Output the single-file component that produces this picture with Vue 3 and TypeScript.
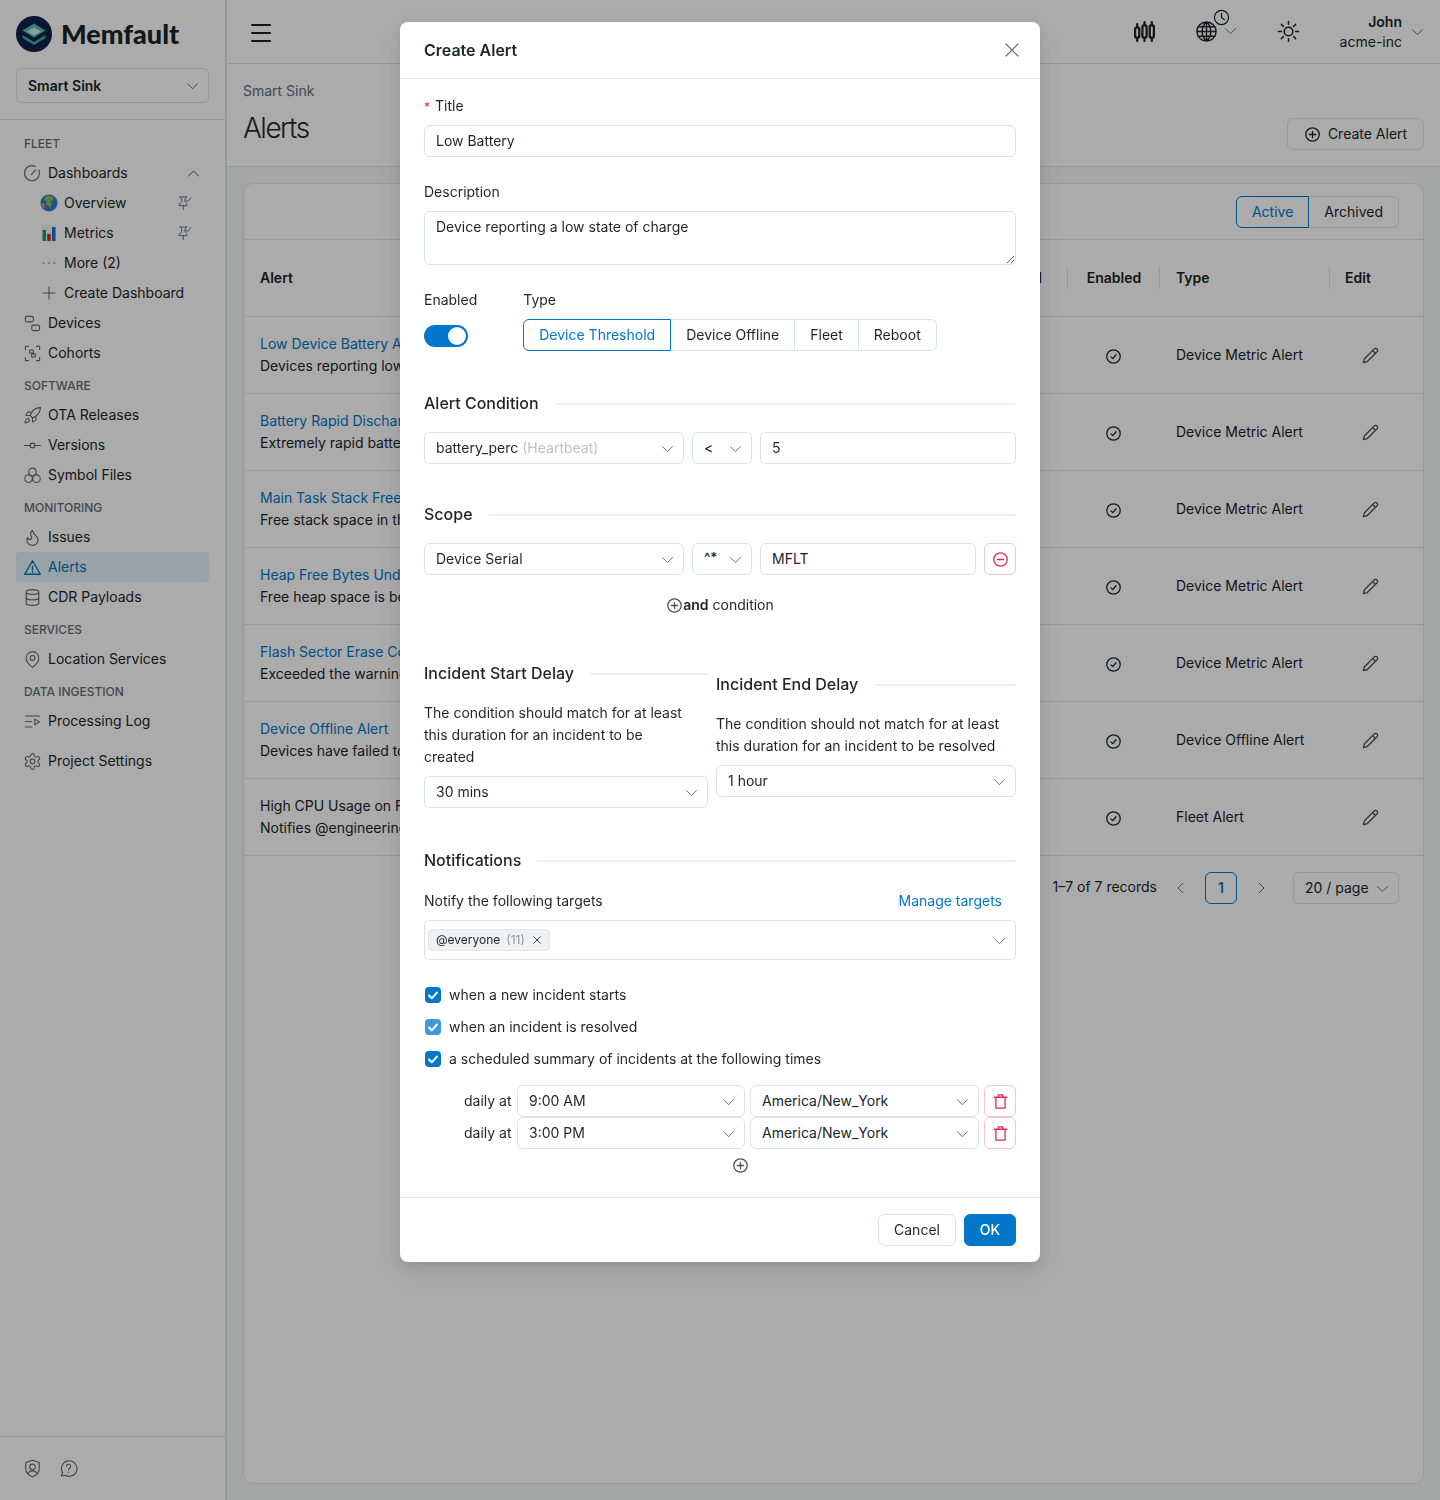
<script setup lang="ts">
import { h } from 'vue';
import type { FunctionalComponent } from 'vue';

const circle = (x: number, y: number, r: number) =>
    `M${x - r} ${y}a${r} ${r} 0 1 0 ${2 * r} 0a${r} ${r} 0 1 0 ${-2 * r} 0`;

const icons = {
    chev: 'M4 9l8 8 8-8',
    chevUp: 'M4 16l8-8 8 8',
    left: 'M15 4l-8 8 8 8',
    right: 'M9 4l8 8-8 8',
    close: 'M4 4l16 16M20 4L4 20',
    plus: 'M12 4v16M4 12h16',
    dots: 'M4 12h1.5M11.2 12h1.5M18.5 12H20',
    gauge: 'M20 7.5A9.5 9.5 0 1 1 15.5 3M10.5 13.5L16 7.5',
    devices: 'M5 3h6a2 2 0 0 1 2 2v3a2 2 0 0 1-2 2H5a2 2 0 0 1-2-2V5a2 2 0 0 1 2-2zM13 14h6a2 2 0 0 1 2 2v3a2 2 0 0 1-2 2h-6a2 2 0 0 1-2-2v-3a2 2 0 0 1 2-2z',
    cohorts: 'M3 7V3h4M17 3h4v4M21 17v4h-4M7 21H3v-4M8.5 7.5h4.5v4H8.5zM11 12.5h4.5v4H11z',
    rocket: 'M4.5 16.5c-1.5 1.3-2 5-2 5s3.7-.5 5-2c.7-.8.7-2.1-.1-2.9a2.2 2.2 0 0 0-2.9-.1zM12 15l-3-3a22 22 0 0 1 2-3.9A12.9 12.9 0 0 1 22 2c0 2.7-.8 7.5-6 11a22 22 0 0 1-4 2zM9 12H4s.6-3 2-4c1.6-1.1 5 0 5 0M12 15v5s3-.6 4-2c1.1-1.6 0-5 0-5',
    commit: `${circle(12, 12, 3)}M2 12h7M15 12h7`,
    symbols: `${circle(12, 7.5, 4.8)}${circle(7, 16, 4.8)}${circle(17, 16, 4.8)}`,
    flame: 'M8.5 14.5A2.5 2.5 0 0 0 11 12c0-1.38-.5-2-1-3-1.07-2.14-.22-4.05 2-6 .5 2.5 2 4.9 4 6.5 2 1.6 3 3.5 3 5.5a7 7 0 1 1-14 0c0-1.15.43-2.29 1-3a2.5 2.5 0 0 0 2.5 2.5z',
    alert: 'M12 3.5L2.2 20.5h19.6zM12 10v5M12 17.2v.8',
    database: 'M4 5c0-1.7 3.6-3 8-3s8 1.3 8 3-3.6 3-8 3-8-1.3-8-3zM4 5v14c0 1.7 3.6 3 8 3s8-1.3 8-3V5M4 12c0 1.7 3.6 3 8 3s8-1.3 8-3',
    pin: `M20 10c0 6-8 12-8 12s-8-6-8-12a8 8 0 0 1 16 0z${circle(12, 10, 3)}`,
    log: 'M3 5h18M3 12h8M3 19h8M15 9l6 3.5-6 3.5z',
    gear: `M12.22 2h-.44a2 2 0 0 0-2 2v.18a2 2 0 0 1-1 1.73l-.43.25a2 2 0 0 1-2 0l-.15-.08a2 2 0 0 0-2.73.73l-.22.38a2 2 0 0 0 .73 2.73l.15.1a2 2 0 0 1 1 1.72v.51a2 2 0 0 1-1 1.74l-.15.09a2 2 0 0 0-.73 2.73l.22.38a2 2 0 0 0 2.73.73l.15-.08a2 2 0 0 1 2 0l.43.25a2 2 0 0 1 1 1.73V20a2 2 0 0 0 2 2h.44a2 2 0 0 0 2-2v-.18a2 2 0 0 1 1-1.73l.43-.25a2 2 0 0 1 2 0l.15.08a2 2 0 0 0 2.73-.73l.22-.39a2 2 0 0 0-.73-2.73l-.15-.08a2 2 0 0 1-1-1.74v-.5a2 2 0 0 1 1-1.74l.15-.09a2 2 0 0 0 .73-2.73l-.22-.38a2 2 0 0 0-2.73-.73l-.15.08a2 2 0 0 1-2 0l-.43-.25a2 2 0 0 1-1-1.73V4a2 2 0 0 0-2-2z${circle(12, 12, 3)}`,
    pinCheck: 'M4 3h11M14 3l-2 3v4M5 3l2 3v4l-4 4v2h12v-2l-2-2M9.500 16v6M13 7.500l2.500 2.500L21 4',
    shield: `M12 1.500l8.500 3v8c0 4.500-3.500 8-8.500 10-5-2-8.500-5.500-8.500-10v-8z${circle(12, 10, 3.500)}M6.500 18.500c1-2.500 3-3.500 5.500-3.500s4.500 1 5.500 3.500`,
    help: 'M3 21.500l1.500-4.500A9.800 9.800 0 1 1 8 20.500zM9.300 9.300a2.700 2.700 0 1 1 4 2.400c-.9.500-1.300 1-1.300 1.900M12 16.500v.5',
    menu: 'M3 4h18M3 12h18M3 20h18',
    candles: 'M5 5v3M5 18v3M12 3v3M12 18v3M19 3v3M19 18v3M3 10a2 2 0 0 1 4 0v6a2 2 0 0 1-4 0zM10 8a2 2 0 0 1 4 0v8a2 2 0 0 1-4 0zM17 8a2 2 0 0 1 4 0v8a2 2 0 0 1-4 0z',
    globe: `${circle(12, 12, 10)}M2 12h20M3 7h18M3 17h18M12 2v20M12 2c-6 5-6 15 0 20M12 2c6 5 6 15 0 20`,
    clock: `${circle(12, 12, 10)}M12 6v6l4 3`,
    sun: `${circle(12, 12, 4.500)}M12 1.500v3M12 19.500v3M1.500 12h3M19.500 12h3M4.600 4.600l2.100 2.100M17.300 17.300l2.100 2.100M4.600 19.400l2.100-2.100M17.300 6.700l2.100-2.100`,
    plusCircle: `${circle(12, 12, 9.500)}M12 7.500v9M7.500 12h9`,
    minusCircle: `${circle(12, 12, 9.500)}M7.500 12h9`,
    checkCircle: `${circle(12, 12, 9.500)}M8.500 12.500l2.500 2.500 4.500-5.500`,
    pencil: 'M17 3a2.850 2.830 0 1 1 4 4L7.500 20.500 2 22l1.500-5.500zM15 5l4 4',
    trash: 'M3 6h18M9 6V2.500h6V6M5.500 6v15.500h13V6',
};

const Ico: FunctionalComponent<{ d: string }> = (props) =>
    h('svg', { viewBox: '0 0 24 24', fill: 'none', stroke: 'currentColor', 'stroke-width': 1.8, 'stroke-linecap': 'round', 'stroke-linejoin': 'round' }, [
        h('path', { d: props.d }),
    ]);
Ico.props = ['d'];

type NavItem = { label: string; icon?: string; sub?: boolean; pinned?: boolean; emoji?: string; active?: boolean; open?: boolean; gap?: boolean };

const nav: { title?: string; items: NavItem[] }[] = [
    {
        title: 'FLEET',
        items: [
            { label: 'Dashboards', icon: icons.gauge, open: true },
            { label: 'Overview', sub: true, emoji: 'globe', pinned: true },
            { label: 'Metrics', sub: true, emoji: 'chart', pinned: true },
            { label: 'More (2)', sub: true, icon: icons.dots },
            { label: 'Create Dashboard', sub: true, icon: icons.plus },
            { label: 'Devices', icon: icons.devices },
            { label: 'Cohorts', icon: icons.cohorts },
        ],
    },
    {
        title: 'SOFTWARE',
        items: [
            { label: 'OTA Releases', icon: icons.rocket },
            { label: 'Versions', icon: icons.commit },
            { label: 'Symbol Files', icon: icons.symbols },
        ],
    },
    {
        title: 'MONITORING',
        items: [
            { label: 'Issues', icon: icons.flame },
            { label: 'Alerts', icon: icons.alert, active: true },
            { label: 'CDR Payloads', icon: icons.database },
        ],
    },
    { title: 'SERVICES', items: [{ label: 'Location Services', icon: icons.pin }] },
    {
        title: 'DATA INGESTION',
        items: [
            { label: 'Processing Log', icon: icons.log },
            { label: 'Project Settings', icon: icons.gear, gap: true },
        ],
    },
];

const rows = [
    { title: 'Low Device Battery Alert', desc: 'Devices reporting low', type: 'Device Metric Alert', link: true },
    { title: 'Battery Rapid Discharge', desc: 'Extremely rapid battery', type: 'Device Metric Alert', link: true },
    { title: 'Main Task Stack Free', desc: 'Free stack space in the', type: 'Device Metric Alert', link: true },
    { title: 'Heap Free Bytes Under', desc: 'Free heap space is below', type: 'Device Metric Alert', link: true },
    { title: 'Flash Sector Erase Count', desc: 'Exceeded the warning', type: 'Device Metric Alert', link: true },
    { title: 'Device Offline Alert', desc: 'Devices have failed to', type: 'Device Offline Alert', link: true },
    { title: 'High CPU Usage on Fleet', desc: 'Notifies @engineering', type: 'Fleet Alert', link: false },
];

const alertTypes = ['Device Threshold', 'Device Offline', 'Fleet', 'Reboot'];
const notifyOptions = ['when a new incident starts', 'when an incident is resolved', 'a scheduled summary of incidents at the following times'];
const schedules = ['9:00 AM', '3:00 PM'];
</script>

<template>
  <div class="page">
    <aside class="sidebar">
      <div class="brand">
        <svg class="logo" viewBox="0 0 36 36">
          <circle cx="18" cy="18" r="18" fill="#13214d" />
          <path d="M18 7.500L6.500 14.500 18 21.500l11.500-7z" fill="#4fc3b4" />
          <path d="M18 11.500l-7 4L18 19.500l7-4z" fill="#cfeee8" />
          <path d="M6.500 19l11.500 7 11.500-7v3L18 29 6.500 22z" fill="#3bb0a6" />
        </svg>
        <span class="brand-name">Memfault</span>
      </div>
      <div class="project">
        <span>Smart Sink</span>
        <Ico class="chev" :d="icons.chev" />
      </div>
      <nav class="nav">
        <template v-for="section in nav" :key="section.title">
          <div class="nav-title">{{ section.title }}</div>
          <div
            v-for="item in section.items"
            :key="item.label"
            class="nav-item"
            :class="{ sub: item.sub, active: item.active, gap: item.gap }"
          >
            <svg v-if="item.emoji === 'globe'" class="nav-ico" viewBox="0 0 18 18">
              <circle cx="9" cy="9" r="8.500" fill="#2f78d6" />
              <path d="M6 1.500c3 0 6 .5 8 2l-1 3-3 .5 2 2.500-2 5-2-3-2.500-1L7 7 4 6z" fill="#8cc04a" />
              <path d="M1.500 9l2.500 1 1 3-1 1.500A8 8 0 0 1 1.500 9z" fill="#d9b44a" />
            </svg>
            <svg v-else-if="item.emoji === 'chart'" class="nav-ico" viewBox="0 0 18 18">
              <rect x="2" y="1" width="14" height="16" fill="#eef2f6" />
              <rect x="2.500" y="6" width="3.500" height="11" fill="#1fa14a" />
              <rect x="7.200" y="10" width="3.500" height="7" fill="#d8261f" />
              <rect x="12" y="3" width="3.500" height="14" fill="#1f6fd1" />
            </svg>
            <Ico v-else class="nav-ico" :d="item.icon as string" />
            <span>{{ item.label }}</span>
            <Ico v-if="item.pinned" class="nav-pin" :d="icons.pinCheck" />
            <Ico v-if="item.open" class="nav-up" :d="icons.chevUp" />
          </div>
        </template>
      </nav>
      <div class="side-foot">
        <Ico :d="icons.shield" />
        <Ico :d="icons.help" />
      </div>
    </aside>

    <main class="main">
      <header class="topbar">
        <Ico class="menu" :d="icons.menu" />
        <div class="top-actions">
          <Ico class="candles" :d="icons.candles" />
          <div class="tz">
            <Ico class="globe" :d="icons.globe" />
            <Ico class="clock" :d="icons.clock" />
            <Ico class="chev" :d="icons.chev" />
          </div>
          <Ico class="sun" :d="icons.sun" />
          <div class="user">
            <div class="user-name"><b>John</b><span>acme-inc</span></div>
            <Ico class="chev" :d="icons.chev" />
          </div>
        </div>
      </header>

      <section class="page-head">
        <div>
          <div class="crumb">Smart Sink</div>
          <h1>Alerts</h1>
        </div>
        <div class="btn create"><Ico :d="icons.plusCircle" />Create Alert</div>
      </section>

      <section class="content">
        <div class="card">
          <div class="toolbar">
            <div class="seg">
              <span class="seg-item on">Active</span>
              <span class="seg-item">Archived</span>
            </div>
          </div>
          <div class="row head">
            <div class="cell first"><span>Alert</span><span>Total</span></div>
            <div class="cell"><span class="th center">Enabled</span></div>
            <div class="cell"><span class="th">Type</span></div>
            <div class="cell"><span class="th last">Edit</span></div>
          </div>
          <div v-for="row in rows" :key="row.title" class="row body">
            <div class="cell first stack">
              <span :class="{ link: row.link }">{{ row.title }}</span>
              <span>{{ row.desc }}</span>
            </div>
            <div class="cell mid"><Ico class="check" :d="icons.checkCircle" /></div>
            <div class="cell type">{{ row.type }}</div>
            <div class="cell edit"><Ico :d="icons.pencil" /></div>
          </div>
          <div class="pager">
            <span class="records">1–7 of 7 records</span>
            <Ico class="arrow" :d="icons.left" />
            <span class="page-no">1</span>
            <Ico class="arrow" :d="icons.right" />
            <div class="per-page"><span>20 / page</span><Ico class="chev" :d="icons.chev" /></div>
          </div>
        </div>
      </section>
    </main>

    <div class="overlay">
      <div class="modal">
        <div class="modal-head">
          <span>Create Alert</span>
          <Ico class="close" :d="icons.close" />
        </div>
        <div class="modal-body">
          <label class="label"><i>*</i>Title</label>
          <div class="field">Low Battery</div>

          <label class="label mt24">Description</label>
          <textarea class="area" rows="2">Device reporting a low state of charge</textarea>

          <div class="type-row">
            <div class="enabled">
              <label class="label">Enabled</label>
              <div class="switch"><span /></div>
            </div>
            <div>
              <label class="label">Type</label>
              <div class="types">
                <span v-for="(t, i) in alertTypes" :key="t" class="type-item" :class="{ on: i === 0 }">{{ t }}</span>
              </div>
            </div>
          </div>

          <h3 class="divider cond">Alert Condition</h3>
          <div class="line">
            <div class="field sel w260"><span>battery_perc <em>(Heartbeat)</em></span><Ico class="chev" :d="icons.chev" /></div>
            <div class="field sel w60"><span>&lt;</span><Ico class="chev" :d="icons.chev" /></div>
            <div class="field grow num">5</div>
          </div>

          <h3 class="divider scope">Scope</h3>
          <div class="line">
            <div class="field sel w260"><span>Device Serial</span><Ico class="chev" :d="icons.chev" /></div>
            <div class="field sel w60 regex"><span>^*</span><Ico class="chev" :d="icons.chev" /></div>
            <div class="field grow num">MFLT</div>
            <div class="danger"><Ico :d="icons.minusCircle" /></div>
          </div>
          <div class="and"><Ico :d="icons.plusCircle" /><b>and</b>&nbsp;condition</div>

          <div class="delays">
            <div class="delay start">
              <h3 class="divider">Incident Start Delay</h3>
              <p>The condition should match for at least this duration for an incident to be created</p>
              <div class="field sel"><span>30 mins</span><Ico class="chev" :d="icons.chev" /></div>
            </div>
            <div class="delay end">
              <h3 class="divider">Incident End Delay</h3>
              <p>The condition should not match for at least this duration for an incident to be resolved</p>
              <div class="field sel"><span>1 hour</span><Ico class="chev" :d="icons.chev" /></div>
            </div>
          </div>

          <h3 class="divider notif">Notifications</h3>
          <div class="notify-head">
            <span>Notify the following targets</span>
            <a>Manage targets</a>
          </div>
          <div class="field sel targets">
            <span class="tag">@everyone <em>(11)</em><Ico :d="icons.close" /></span>
            <Ico class="chev" :d="icons.chev" />
          </div>

          <div class="checks">
            <div v-for="(opt, i) in notifyOptions" :key="opt" class="check-row">
              <span class="box" :class="{ soft: i === 1 }">
                <svg viewBox="0 0 16 16"><path d="M4 8.500l2.800 2.800L12 5.500" /></svg>
              </span>
              {{ opt }}
            </div>
          </div>

          <div v-for="time in schedules" :key="time" class="daily">
            <span class="daily-at">daily at</span>
            <div class="field sel time"><span>{{ time }}</span><Ico class="chev" :d="icons.chev" /></div>
            <div class="field sel zone"><span>America/New_York</span><Ico class="chev" :d="icons.chev" /></div>
            <div class="danger"><Ico :d="icons.trash" /></div>
          </div>
          <div class="add-time"><Ico :d="icons.plusCircle" /></div>
        </div>
        <div class="modal-foot">
          <div class="btn cancel">Cancel</div>
          <div class="btn ok">OK</div>
        </div>
      </div>
    </div>
  </div>
</template>

<style>
html,
body {
  margin: 0;
  background: #fff;
}
</style>

<style scoped>
.page {
  display: flex;
  min-height: 1500px;
  font-family: Inter, "Liberation Sans", sans-serif;
  font-size: 14px;
  line-height: 22px;
  color: #1b2527;
  background: #fff;
}

svg {
  display: block;
  flex: none;
}

.chev {
  width: 15px;
  height: 15px;
  margin-right: -3px;
  color: #5d6b73;
  stroke-width: 1.5;
}

/* sidebar */
.sidebar {
  width: 225px;
  flex: none;
  display: flex;
  flex-direction: column;
  border-right: 2px solid #dfe5e7;
}

.brand {
  display: flex;
  align-items: center;
  gap: 9px;
  padding: 16px 16px 0;
}

.logo {
  width: 36px;
  height: 36px;
}

.brand-name {
  font-family: Lato, sans-serif;
  font-weight: 900;
  font-size: 27px;
  line-height: 36px;
  color: #16262b;
}

.project {
  display: flex;
  align-items: center;
  justify-content: space-between;
  height: 35px;
  box-sizing: border-box;
  margin: 16px 16px 16px;
  padding: 0 11px;
  border: 1px solid #dce2e4;
  border-radius: 6px;
  font-weight: 600;
}

.nav {
  flex: 1;
  padding: 6px 16px 0;
  border-top: 1px solid #dfe5e7;
}

.nav-title {
  height: 32px;
  padding: 3px 8px 0;
  box-sizing: border-box;
  font-size: 12px;
  line-height: 30px;
  font-weight: 500;
  color: #5f6f78;
}

.nav-item {
  display: flex;
  align-items: center;
  height: 30px;
  padding: 0 8px;
  border-radius: 4px;
  gap: 8px;
  color: #1d282b;
}

.nav-item.gap {
  margin-top: 10px;
}

.nav-item.sub {
  padding-left: 24px;
  gap: 6px;
}

.nav-item.active {
  background: #e2f4f8;
  color: #0073bd;
}

.nav-ico {
  width: 19px;
  height: 19px;
  margin: 0 -1.5px;
  color: #5d6b73;
  stroke-width: 1.4;
}

.active .nav-ico {
  color: #0073bd;
  stroke-width: 1.7;
}

.sub .nav-ico {
  width: 18px;
  height: 18px;
  margin: 0;
}

.nav-pin {
  width: 16px;
  height: 16px;
  margin-left: auto;
  margin-right: 8px;
  color: #5d6b73;
  stroke-width: 1.4;
}

.nav-up {
  width: 15px;
  height: 15px;
  margin-left: auto;
  color: #44535c;
  stroke-width: 1.6;
}

.side-foot {
  display: flex;
  align-items: center;
  gap: 17px;
  height: 64px;
  box-sizing: border-box;
  padding-left: 22.500px;
  border-top: 1px solid #dfe5e7;
  color: #5d6b73;
}

.side-foot svg {
  width: 19px;
  height: 19px;
  stroke-width: 1.4;
}

/* main column */
.main {
  flex: 1;
  min-width: 0;
  display: flex;
  flex-direction: column;
}

.topbar {
  height: 64px;
  box-sizing: border-box;
  display: flex;
  align-items: center;
  justify-content: space-between;
  padding: 0 18px 0 22px;
  border-bottom: 1px solid #dfe5e7;
}

.menu {
  width: 24px;
  height: 24px;
  margin-top: 2px;
  color: #1b2527;
  stroke-width: 2;
}

.top-actions {
  display: flex;
  align-items: center;
}

.candles {
  width: 25px;
  height: 25px;
  stroke-width: 2.200;
  color: #1b2527;
  margin-right: 38px;
}

.tz {
  position: relative;
  width: 36px;
  height: 23px;
  margin-right: 46px;
}

.globe {
  width: 23px;
  height: 23px;
  color: #1b2527;
  stroke-width: 1.500;
}

.tz .clock {
  position: absolute;
  left: 18px;
  top: -11px;
  width: 17px;
  height: 17px;
  color: #1b2527;
  stroke-width: 1.700;
}

.tz .chev {
  position: absolute;
  left: 28px;
  top: 3px;
}

.sun {
  width: 23px;
  height: 23px;
  margin-right: 40px;
  color: #1b2527;
  stroke-width: 1.600;
}

.user {
  display: flex;
  align-items: center;
  gap: 8px;
}

.user-name {
  display: flex;
  flex-direction: column;
  align-items: flex-end;
  line-height: 20px;
}

.user-name b {
  font-weight: 600;
}

.page-head {
  height: 103px;
  flex: none;
  box-sizing: border-box;
  display: flex;
  justify-content: space-between;
  padding: 16px 16px 0;
  border-bottom: 1px solid #dfe5e7;
}

.crumb {
  color: #5f6f78;
  line-height: 22px;
}

h1 {
  margin: 7px 0 0;
  font-size: 28px;
  line-height: 38px;
  font-weight: 300;
  letter-spacing: -1.500px;
  color: #1f2b2e;
}

.btn {
  display: flex;
  align-items: center;
  justify-content: center;
  height: 32px;
  box-sizing: border-box;
  border: 1px solid #dde3e5;
  border-radius: 6px;
  background: #fff;
}

.create {
  margin-top: 38px;
  width: 137px;
  gap: 7px;
  background: transparent;
}

.create svg {
  width: 17px;
  height: 17px;
}

.content {
  flex: 1;
  padding: 16px;
  background: #f5f8f7;
}

.card {
  height: 100%;
  box-sizing: border-box;
  min-height: 1300px;
  background: #fff;
  border: 1px solid #e2e7e9;
  border-radius: 10px;
  overflow: hidden;
}

.toolbar {
  display: flex;
  justify-content: flex-end;
  height: 56px;
  box-sizing: border-box;
  padding: 12px 24px 0;
  border-bottom: 1px solid #e2e7e9;
}

.seg {
  display: flex;
  height: 32px;
}

.seg-item {
  padding: 0 15px;
  line-height: 29px;
  border: 1px solid #dde3e5;
  border-left: 0;
  border-radius: 0 6px 6px 0;
}

.seg-item.on {
  padding: 0 15px;
  color: #0077c8;
  border: 1px solid #0077c8;
  border-radius: 6px 0 0 6px;
}

.row {
  display: grid;
  grid-template-columns: 823px 92px 170px 1fr;
  border-bottom: 1px solid #e2e7e9;
  height: 77px;
  box-sizing: border-box;
}

.cell {
  display: flex;
  align-items: center;
  min-width: 0;
}

.head {
  font-weight: 600;
}

.head .first {
  justify-content: space-between;
  padding: 0 25px 0 16px;
}

.th {
  flex: 1;
  border-left: 1px solid #dde3e5;
  line-height: 22px;
  padding-left: 16px;
}

.th.center {
  padding: 0 0 0 1px;
  text-align: center;
}

.th.last {
  padding-left: 15px;
}

.stack {
  flex-direction: column;
  align-items: flex-start;
  justify-content: center;
  padding-left: 16px;
  white-space: nowrap;
}

.link {
  color: #0077c8;
}

.mid {
  justify-content: center;
  padding-left: 1px;
}

.check {
  width: 17px;
  height: 17px;
  margin-top: 2px;
}

.type {
  padding-left: 17px;
}

.edit {
  padding-left: 33px;
  color: #3f4d55;
}

.edit svg {
  width: 17px;
  height: 17px;
}

.pager {
  display: flex;
  align-items: center;
  padding: 16px 24px 0 0;
  justify-content: flex-end;
}

.records {
  margin: -2px 17px 0 0;
}

.arrow {
  width: 14px;
  height: 14px;
  color: #5d6b73;
  stroke-width: 1.700;
}

.page-no {
  width: 32px;
  height: 32px;
  box-sizing: border-box;
  margin: 0 17px;
  border: 1px solid #0077c8;
  border-radius: 6px;
  color: #0077c8;
  font-weight: 600;
  text-align: center;
  line-height: 30px;
}

.per-page {
  display: flex;
  align-items: center;
  justify-content: space-between;
  white-space: nowrap;
  height: 32px;
  box-sizing: border-box;
  width: 106px;
  margin-left: 25px;
  padding: 0 11px;
  border: 1px solid #dde3e5;
  border-radius: 6px;
}

/* modal */
.overlay {
  position: fixed;
  inset: 0;
  display: flex;
  justify-content: center;
  align-items: flex-start;
  padding-top: 22px;
  background: rgba(0, 0, 0, 0.33);
}

.modal {
  width: 640px;
  background: #fff;
  border-radius: 8px;
  box-shadow: 0 6px 16px rgba(0, 0, 0, 0.08), 0 3px 6px -4px rgba(0, 0, 0, 0.12), 0 9px 28px 8px rgba(0, 0, 0, 0.05);
}

.modal-head {
  display: flex;
  align-items: center;
  justify-content: space-between;
  height: 57px;
  box-sizing: border-box;
  padding: 0 19px 1px 24px;
  border-bottom: 1px solid #e2e7e9;
  font-size: 16px;
  font-weight: 600;
}

.close {
  width: 18px;
  height: 18px;
  color: #5d6b73;
  stroke-width: 1.500;
}

.modal-body {
  padding: 16px 24px 24px;
}

.label {
  display: block;
  margin-bottom: 8px;
}

.label i {
  font-style: normal;
  line-height: 1;
  color: #e0294f;
  margin-right: 5px;
  font-size: 12px;
}

.mt24 {
  margin-top: 24px;
}

.field {
  height: 32px;
  box-sizing: border-box;
  padding: 0 11px;
  border: 1px solid #dde3e5;
  border-radius: 6px;
  line-height: 30px;
  background: #fff;
}

.area {
  display: block;
  width: 100%;
  height: 54px;
  box-sizing: border-box;
  margin: 0;
  padding: 4px 11px;
  border: 1px solid #dde3e5;
  border-radius: 6px;
  font: inherit;
  line-height: 22px;
  color: inherit;
  outline: none;
}

.type-row {
  display: flex;
  gap: 46px;
  margin-top: 24px;
}

.switch {
  display: flex;
  justify-content: flex-end;
  align-items: center;
  width: 44px;
  height: 22px;
  margin-top: 14px;
  padding: 2px;
  box-sizing: border-box;
  border-radius: 11px;
  background: #0077c8;
}

.switch span {
  width: 18px;
  height: 18px;
  border-radius: 50%;
  background: #fff;
}

.types {
  display: flex;
  height: 32px;
}

.type-item {
  padding: 0 15px;
  line-height: 30px;
  border: 1px solid #dde3e5;
  border-left: 0;
}

.type-item:last-child {
  border-radius: 0 6px 6px 0;
}

.type-item.on {
  color: #0077c8;
  border: 1px solid #0077c8;
  border-radius: 6px 0 0 6px;
}

.divider {
  display: flex;
  align-items: center;
  gap: 16px;
  margin: 0 0 17px;
  font-size: 16px;
  line-height: 24px;
  font-weight: 500;
  white-space: nowrap;
}

.divider::after {
  content: "";
  flex: 1;
  height: 2px;
  margin-top: 2px;
  background: #eef1f2;
}

.cond {
  margin-top: 40px;
}

.scope {
  margin-top: 38px;
}

.notif {
  margin-top: 40px;
}

.line {
  display: flex;
  gap: 8px;
}

.sel {
  display: flex;
  align-items: center;
  justify-content: space-between;
}

.w260 {
  width: 260px;
}

.w60 {
  width: 60px;
}

.regex span {
  font-weight: 600;
  font-size: 13px;
  margin-top: -5px;
}

.grow {
  flex: 1;
}

.num {
  padding-left: 11px;
}

em {
  font-style: normal;
  color: #b9c2c6;
}

.danger {
  display: flex;
  align-items: center;
  justify-content: center;
  flex: none;
  width: 32px;
  height: 32px;
  box-sizing: border-box;
  border: 1px solid #f5c4cf;
  border-radius: 6px;
  color: #e0294f;
}

.danger svg {
  width: 17px;
  height: 17px;
}

.and {
  display: flex;
  align-items: center;
  justify-content: center;
  margin-top: 19px;
}

.and svg {
  width: 17px;
  height: 17px;
  margin-top: 1px;
  color: #44535c;
}

.and b {
  font-weight: 600;
}

.delays {
  display: flex;
  gap: 8px;
  margin-top: 45px;
}

.delay {
  min-width: 0;
}

.delay .divider {
  margin-bottom: 17px;
}

.delay p {
  margin: 0 0 8px;
}

.start {
  width: 284px;
  flex: none;
}

.start p {
  padding-right: 16px;
}

.end {
  flex: 1;
  margin-top: 11px;
}

.notify-head {
  display: flex;
  justify-content: space-between;
  padding-right: 14px;
  margin-top: 18px;
}

.notify-head a {
  color: #0077c8;
}

.targets {
  height: 40px;
  margin-top: 8px;
  padding: 0 11px 0 3px;
}

.tag {
  display: flex;
  align-items: center;
  height: 22px;
  box-sizing: border-box;
  padding: 0 7px;
  border: 1px solid #e2e7e9;
  border-radius: 4px;
  background: #eef2f2;
  font-size: 12px;
  line-height: 20px;
}

.tag em {
  color: #8a979e;
  margin-left: 6px;
}

.tag svg {
  width: 10px;
  height: 10px;
  margin-left: 7px;
  stroke-width: 2;
}

.checks {
  margin-top: 19px;
}

.check-row {
  display: flex;
  align-items: center;
  gap: 8px;
  height: 32px;
  padding-left: 1px;
}

.box {
  width: 16px;
  height: 16px;
  border-radius: 4px;
  background: #0077c8;
}

.box.soft {
  background: #4099d6;
}

.box svg {
  width: 16px;
  height: 16px;
  fill: none;
  stroke: #fff;
  stroke-width: 2;
  stroke-linecap: round;
  stroke-linejoin: round;
}

.daily {
  display: flex;
  align-items: center;
}

.checks + .daily {
  margin-top: 10px;
}

.daily-at {
  padding-left: 40px;
  width: 93px;
  box-sizing: border-box;
  flex: none;
}

.time {
  width: 228px;
  margin-right: 5px;
}

.zone {
  width: 229px;
  margin-right: 5px;
}

.add-time {
  display: flex;
  justify-content: center;
  height: 16px;
  margin: 8px 0 0 40px;
  color: #44535c;
}

.add-time svg {
  width: 17px;
  height: 17px;
}

.modal-foot {
  display: flex;
  justify-content: flex-end;
  gap: 8px;
  padding: 16px 24px;
  border-top: 1px solid #e2e7e9;
}

.cancel {
  width: 78px;
}

.ok {
  width: 52px;
  border-color: #0077c8;
  background: #0077c8;
  color: #fff;
  font-weight: 500;
}
</style>
